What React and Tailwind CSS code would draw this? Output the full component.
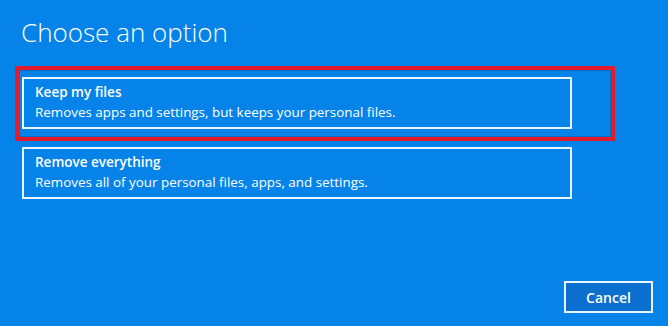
const Option = ({ title, desc, highlighted }) => {
  return (
    <div className="relative w-[550px] h-[52px] border-2 border-[#e8f6ff] pl-[11px] pt-[3px] text-white">
      <div className="text-[13.5px] leading-[20px] font-semibold">{title}</div>
      <div className="text-[13.4px] leading-[20px]">{desc}</div>
      {highlighted && (
        <div className="absolute left-[-9px] top-[-13px] w-[600px] h-[75px] border-4 border-[#e41b2c] shadow-[inset_0_0_0_1px_#0a6cc4] pointer-events-none" />
      )}
    </div>
  );
};

export default function App() {
  return (
    <div
      className="w-[668px] h-[326px] bg-[#0583e8] flex flex-col overflow-hidden"
      style={{ fontFamily: '"Open Sans", "Noto Sans", sans-serif' }}
    >
      <h1 className="ml-[21px] mt-[14px] text-[26px] leading-[36px] font-light text-white">Choose an option</h1>
      <div className="ml-[22px] mt-[27px] flex flex-col gap-[18px]">
        <Option
          highlighted
          title="Keep my files"
          desc="Removes apps and settings, but keeps your personal files."
        />
        <Option
          title="Remove everything"
          desc="Removes all of your personal files, apps, and settings."
        />
      </div>
      <div className="mt-auto mb-[13px] mr-[15px] flex justify-end">
        <button className="w-[89px] h-[32px] border-2 border-[#e8f6ff] bg-[#0a6fcf] text-white text-[14px] font-semibold">
          Cancel
        </button>
      </div>
    </div>
  );
}
